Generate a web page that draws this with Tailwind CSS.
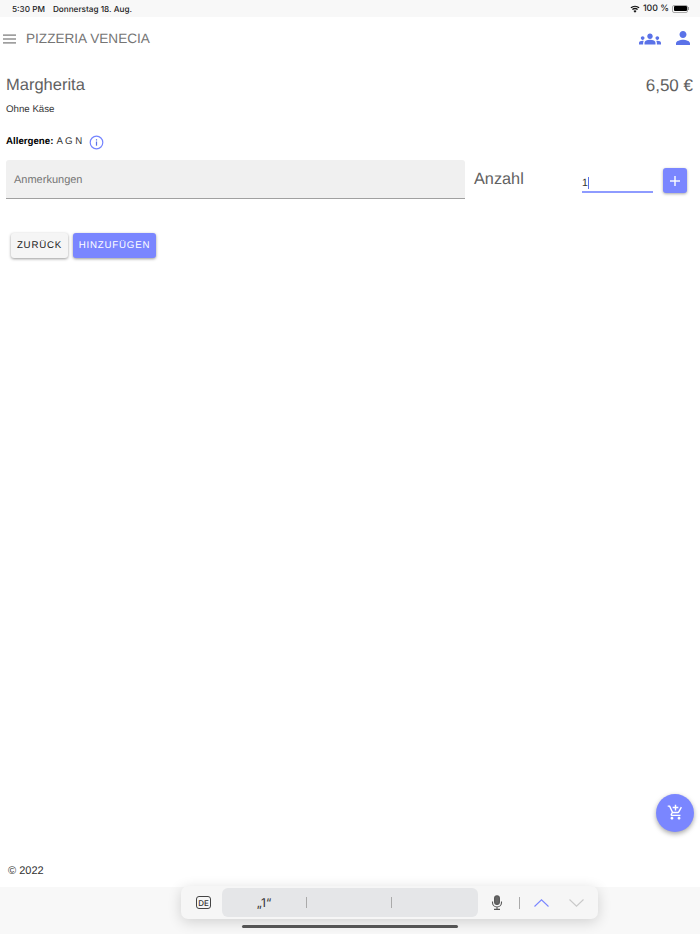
<!DOCTYPE html>
<html lang="de"><head><meta charset="utf-8"><script src="https://cdn.jsdelivr.net/npm/@tailwindcss/browser@4"></script></head>
<body class="m-0 bg-white">
<div class="relative w-[700px] h-[934px] overflow-hidden flex flex-col bg-white font-['Liberation_Sans',sans-serif] [text-rendering:geometricPrecision]">
  <!-- status bar -->
  <div class="h-[17px] shrink-0 bg-[#f8f8f8] flex items-center justify-between pl-[12px] pr-[11px] font-['Inter',sans-serif] text-[8.200px] font-medium text-[#222]">
    <div class="flex gap-[8px] pt-[1px]"><span>5:30 PM</span><span>Donnerstag 18. Aug.</span></div>
    <div class="flex items-center gap-[3px]">
      <svg class="w-[10px] h-[8px]" viewBox="0 0 20 15" fill="#111"><path d="M10 15l-3-3.600a4.600 4.600 0 0 1 6 0zM5.600 9.600 4 7.700a9.400 9.400 0 0 1 12 0l-1.600 1.900a6.900 6.900 0 0 0-8.800 0zM2.600 6 1 4.100a14 14 0 0 1 18 0L17.400 6a11.600 11.600 0 0 0-14.800 0z"/></svg>
      <span class="text-[8.800px] pt-[1px]">100 %</span>
      <div class="flex items-center"><div class="w-[16px] h-[8px] rounded-[2px] border border-[#aaa] p-[0.500px] flex"><div class="flex-1 bg-black rounded-[1px]"></div></div><div class="w-[1px] h-[3px] bg-[#999]"></div></div>
    </div>
  </div>
  <!-- app bar -->
  <div class="h-[44px] shrink-0 flex items-center justify-between pl-[3px] pr-[10px]">
    <div class="flex items-center gap-[10px]">
      <svg class="w-[13px] h-[10px]" viewBox="0 0 13 10" fill="#777"><rect y="0.500" width="13" height="1.200"/><rect y="4.400" width="13" height="1.200"/><rect y="8.300" width="13" height="1.200"/></svg>
      <span class="text-[13.600px] text-[#757575]">PIZZERIA VENECIA</span>
    </div>
    <div class="flex items-center gap-[15px]">
      <svg class="w-[22px] h-[22px]" viewBox="0 0 24 24" fill="#5a72e8"><path d="M12 12.750c1.630 0 3.070.390 4.240.900 1.080.480 1.760 1.560 1.760 2.730V18H6v-1.610c0-1.180.680-2.260 1.760-2.730 1.170-.520 2.610-.910 4.240-.910zM4 13c1.100 0 2-.900 2-2s-.900-2-2-2-2 .900-2 2 .900 2 2 2zm1.130 1.100C4.760 14.040 4.390 14 4 14c-.990 0-1.930.210-2.780.580C.480 14.900 0 15.620 0 16.430V18h4.500v-1.610c0-.830.230-1.610.630-2.290zM20 13c1.100 0 2-.900 2-2s-.900-2-2-2-2 .900-2 2 .900 2 2 2zm4 3.430c0-.810-.480-1.530-1.220-1.850C21.930 14.210 20.990 14 20 14c-.390 0-.760.040-1.130.100.400.680.630 1.460.630 2.290V18H24v-1.570zM12 6c1.660 0 3 1.340 3 3s-1.340 3-3 3-3-1.340-3-3 1.340-3 3-3z"/></svg>
      <svg class="w-[14px] h-[14px] -mt-[2px]" viewBox="4 4 16 16" fill="#5a72e8"><path d="M12 12c2.210 0 4-1.790 4-4s-1.790-4-4-4-4 1.790-4 4 1.790 4 4 4zm0 2c-2.670 0-8 1.340-8 4v2h16v-2c0-2.660-5.330-4-8-4z"/></svg>
    </div>
  </div>
  <!-- content -->
  <div class="pl-[6px] pr-[7px] pt-[13px]">
    <div class="flex items-center justify-between h-[23px]">
      <span class="text-[16.500px] text-[#616161]">Margherita</span>
      <span class="text-[17px] text-[#616161]">6,50 €</span>
    </div>
    <div class="mt-[6px] h-[15px] flex items-center text-[9.700px] text-[#333]">Ohne Käse</div>
    <div class="mt-[15px] h-[19px] flex items-center text-[9.700px] text-[#333]">
      <b class="font-bold text-black">Allergene:</b><span class="ml-[3px]">A G N</span>
      <svg class="ml-[7px] w-[15px] h-[15px]" viewBox="0 0 15 15" fill="none"><circle cx="7.500" cy="7.500" r="6.300" stroke="#7484ff" stroke-width="1.200"/><rect x="6.900" y="6.500" width="1.200" height="4.200" fill="#5a72e8"/><rect x="6.900" y="4.200" width="1.200" height="1.300" fill="#5a72e8"/></svg>
    </div>
    <div class="mt-[8px] flex items-start">
      <div class="w-[459px] h-[39px] bg-[#f0f0f0] border-b border-[#a0a0a0] rounded-t-[3px] flex items-center pl-[8px] pt-[2px] text-[11px] text-[#757575]">Anmerkungen</div>
      <div class="ml-[9px] w-[108px] h-[39px] flex items-center text-[16.300px] text-[#616161]">Anzahl</div>
      <div class="mt-[2px] w-[71px] h-[31px] border-b-2 border-[#8e9bff] pt-[15px] flex items-start text-[10.500px] text-[#333] leading-[12px]"><span>1</span><span class="w-[1px] h-[12px] bg-[#5a72e8] ml-[0.500px]"></span></div>
      <div class="ml-[10px] mt-[8px] w-[24px] h-[25px] bg-[#7a86ff] rounded-[3px] shadow-[0_1px_3px_rgba(0,0,0,0.35)] flex items-center justify-center">
        <svg class="w-[10px] h-[10px]" viewBox="0 0 10 10" fill="#fff"><rect x="4.300" width="1.400" height="10"/><rect y="4.300" width="10" height="1.400"/></svg>
      </div>
    </div>
    <div class="mt-[34px] ml-[5px] flex gap-[5px]">
      <div class="w-[57px] h-[25px] pt-[1px] bg-[#f5f5f5] rounded-[3px] shadow-[0_1px_3px_rgba(0,0,0,0.4)] flex items-center justify-center text-[9.700px] tracking-[0.8px] text-[#222]">ZURÜCK</div>
      <div class="w-[83px] h-[25px] pt-[1px] bg-[#7a86ff] rounded-[3px] shadow-[0_1px_3px_rgba(0,0,0,0.4)] flex items-center justify-center text-[9.700px] tracking-[0.8px] text-white">HINZUFÜGEN</div>
    </div>
  </div>
  <div class="flex-1"></div>
  <!-- footer -->
  <div class="h-[31px] shrink-0 pl-[8px] text-[11px] text-[#333] flex items-start pt-[7px]">© 2022</div>
  <div class="h-[47px] shrink-0 bg-[#f8f8f8]"></div>

  <!-- FAB -->
  <div class="absolute left-[656px] top-[794px] w-[38px] h-[38px] rounded-full bg-[#7a86ff] shadow-[0_2px_5px_rgba(0,0,0,0.35)] flex items-center justify-center">
    <svg class="w-[17px] h-[17px] -mt-[1px]" viewBox="0 0 24 24" fill="#fff"><path d="M11 9h2V6h3V4h-3V1h-2v3H8v2h3v3zm-4 9c-1.100 0-1.990.900-1.990 2S5.900 22 7 22s2-.900 2-2-.900-2-2-2zm10 0c-1.100 0-1.990.900-1.990 2s.890 2 1.990 2 2-.900 2-2-.900-2-2-2zm-9.830-3.250.030-.120.900-1.630h7.450c.750 0 1.410-.410 1.750-1.030l3.860-7.010L19.420 4h-.010l-1.100 2-2.760 5H8.530l-.130-.270L6.160 6l-.950-2-.940-2H1v2h2l3.600 7.590-1.350 2.450c-.160.280-.250.610-.250.960 0 1.100.900 2 2 2h12v-2H7.420c-.130 0-.250-.110-.250-.250z"/></svg>
  </div>

  <!-- keyboard accessory -->
  <div class="absolute left-[181px] top-[886px] w-[417px] h-[33px] rounded-[7px] bg-[#f6f6f6] shadow-[0_3px_14px_rgba(0,0,0,0.16)] flex items-center pl-[41px]">
    <div class="absolute left-[15px] top-[10px] w-[15px] h-[13px] rounded-[3px] border border-[#444] flex items-center justify-center font-['Inter',sans-serif] text-[8px] font-medium text-[#333]">DE</div>
    <div class="w-[256px] h-[29px] rounded-[6px] bg-[#e5e6e8] flex items-center">
      <div class="w-[84px] flex justify-center text-[12px] text-[#333] font-['Inter',sans-serif]">„1“</div>
      <div class="w-[1px] h-[11px] bg-[#aaa]"></div>
      <div class="w-[84px]"></div>
      <div class="w-[1px] h-[11px] bg-[#aaa]"></div>
    </div>
    <svg class="ml-[13px] w-[12px] h-[15px]" viewBox="0 0 12 15" fill="none" stroke="#555" stroke-width="1.100"><rect x="3.600" y="0.800" width="4.800" height="8.600" rx="2.400" fill="#666"/><path d="M1.500 6.500v1a4.500 4.500 0 0 0 9 0v-1M6 12v2.300M3 14.400h6"/></svg>
    <div class="ml-[16px] w-[1px] h-[12px] bg-[#aaa]"></div>
    <svg class="ml-[14px] w-[15px] h-[8px]" viewBox="0 0 15 8" fill="none" stroke="#7a86ff" stroke-width="1.100"><path d="M.5 7.500 7.500.800l7 6.700"/></svg>
    <svg class="ml-[20px] w-[15px] h-[8px]" viewBox="0 0 15 8" fill="none" stroke="#c9c9c9" stroke-width="1.100"><path d="M.5.500l7 6.700 7-6.700"/></svg>
  </div>
  <!-- home indicator -->
  <div class="absolute left-[242px] top-[925px] w-[216px] h-[3px] rounded-full bg-[#555]"></div>
</div>
</body></html>
